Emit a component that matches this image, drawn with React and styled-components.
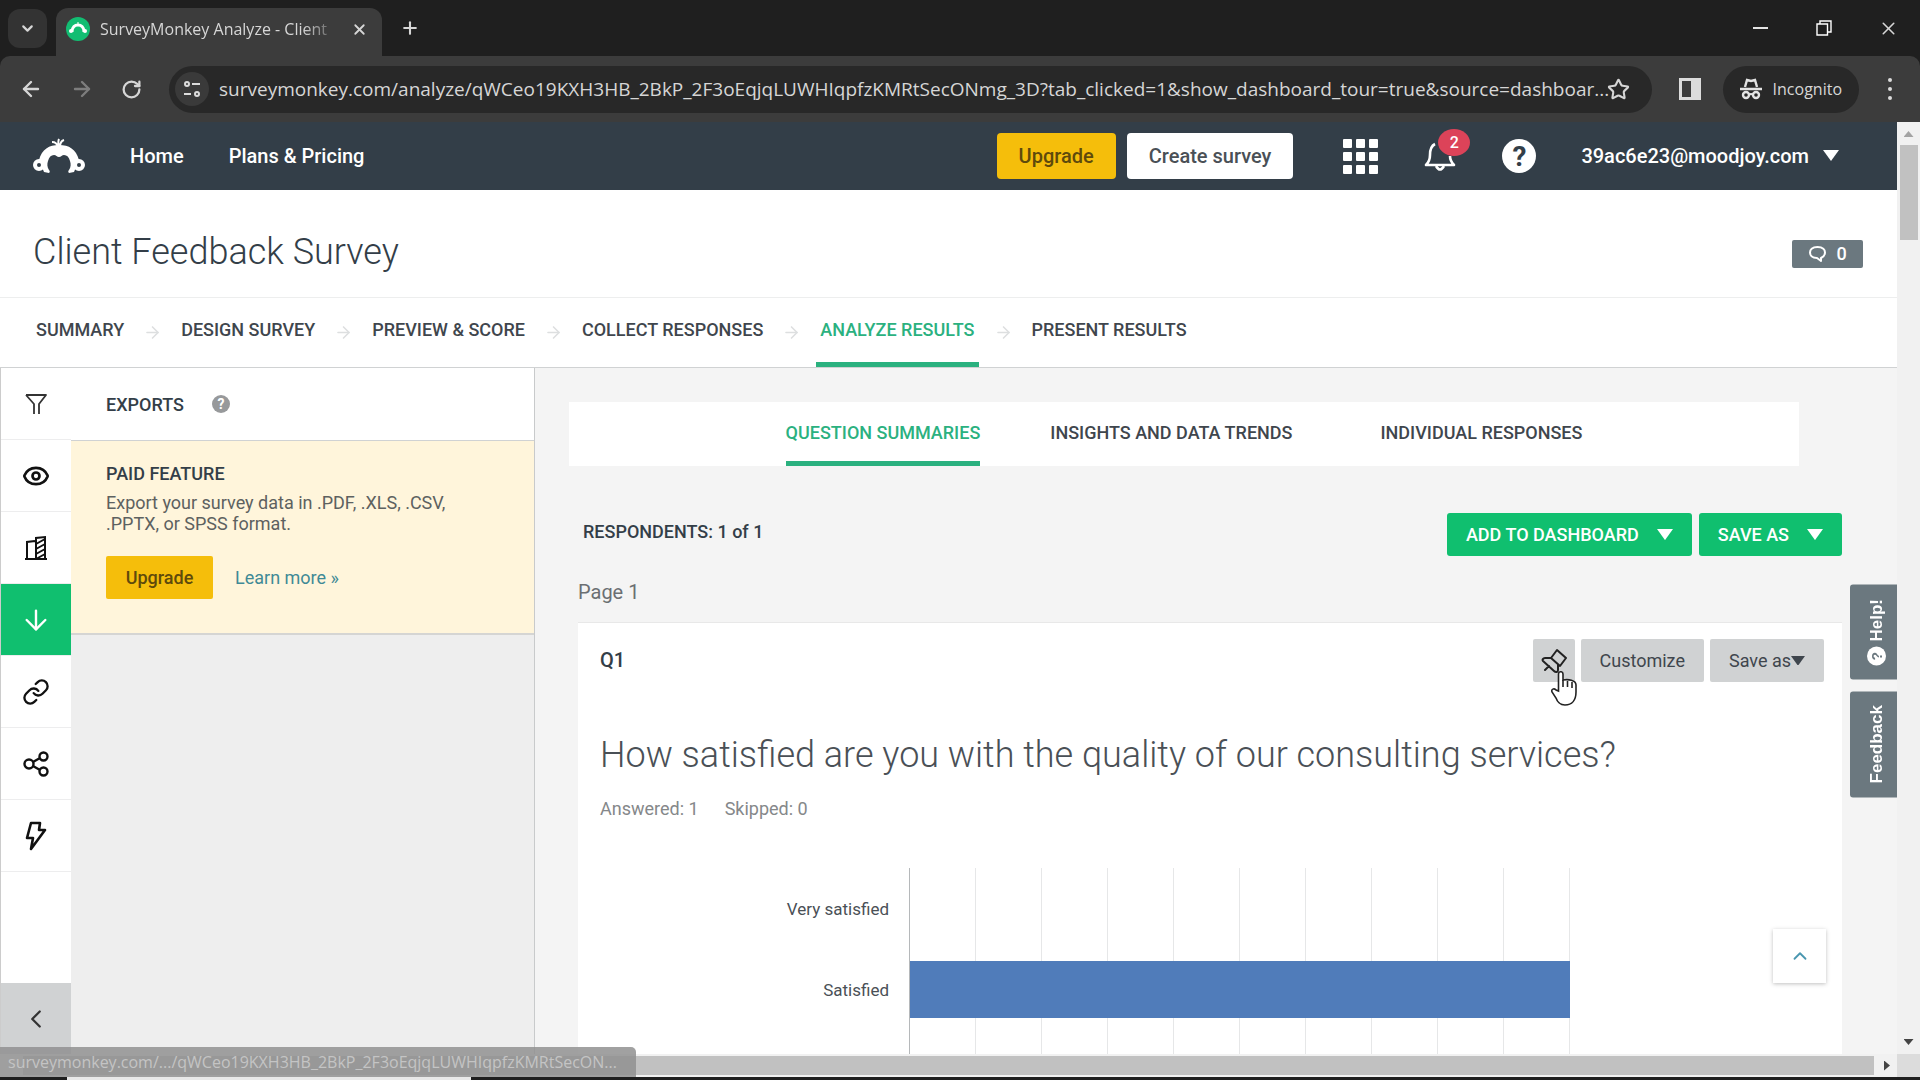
import React from "react";
import styled, { createGlobalStyle } from "styled-components";
import {
  ArrowDown,
  ArrowLeft,
  ArrowRight,
  ChevronDown,
  ChevronLeft,
  ChevronUp,
  Eye,
  Plus,
  RotateCw,
  Star,
  X,
} from "lucide-react";

const steps = [
  "SUMMARY",
  "DESIGN SURVEY",
  "PREVIEW & SCORE",
  "COLLECT RESPONSES",
  "ANALYZE RESULTS",
  "PRESENT RESULTS",
];

const views = [
  "QUESTION SUMMARIES",
  "INSIGHTS AND DATA TRENDS",
  "INDIVIDUAL RESPONSES",
];

const answers = [
  { label: "Very satisfied", value: 0 },
  { label: "Satisfied", value: 100 },
];

const Caret = ({ size = 16 }) => (
  <svg width={size} height={size * 0.7} viewBox="0 0 16 11" aria-hidden="true">
    <path d="M0 0h16L8 11z" fill="currentColor" />
  </svg>
);

const MonkeyLogo = () => (
  <svg width="52" height="36" viewBox="0 0 52 36" aria-hidden="true">
    <path
      d="M6 22C9 11 16 7 26 7s17 4 20 15l-5 12-5 1c-1-1-1-2 0-3 2-3 2-6 1-9-1-4-3-6-6-6-2 0-3 2-5 2s-3-2-5-2c-3 0-5 2-6 6-1 3-1 6 1 9 1 1 1 2 0 3l-5-1z"
      fill="#fff"
    />
    <path
      d="M25 9c-1-4-3-5-6-5M26 9c-1-4-1-6 0-8M27 9c0-4 1-6 4-7"
      fill="none"
      stroke="#fff"
      strokeWidth="2"
    />
    <circle cx="6" cy="27" r="4" fill="#333e48" stroke="#fff" strokeWidth="4" />
    <circle cx="46" cy="27" r="4" fill="#333e48" stroke="#fff" strokeWidth="4" />
  </svg>
);

const Favicon = () => (
  <svg width="24" height="24" viewBox="0 0 24 24" aria-hidden="true">
    <circle cx="12" cy="12" r="12" fill="#12bd72" />
    <path
      d="M6 15c0-5 3-7 6-7s6 2 6 7"
      fill="none"
      stroke="#fff"
      strokeWidth="3"
    />
    <circle cx="5" cy="14" r="2" fill="#fff" />
    <circle cx="19" cy="14" r="2" fill="#fff" />
    <path d="M12 8V5" stroke="#fff" />
  </svg>
);

const TuneIcon = () => (
  <svg
    width="20"
    height="20"
    viewBox="0 0 20 20"
    fill="none"
    stroke="#dcdcdc"
    strokeWidth="2"
    aria-hidden="true"
  >
    <circle cx="5" cy="5" r="2" />
    <path d="M10 5h8M2 15h7" />
    <circle cx="15" cy="15" r="2" />
  </svg>
);

const RestoreIcon = () => (
  <svg
    width="16"
    height="16"
    viewBox="0 0 16 16"
    fill="none"
    stroke="#fff"
    strokeWidth="1.4"
    aria-hidden="true"
  >
    <path d="M1 4h10.500v11H1zM4 4V1h11v11h-3" />
  </svg>
);

const SidePanelIcon = () => (
  <svg width="22" height="22" viewBox="0 0 22 22" aria-hidden="true">
    <path d="M0 0h22v22H0zM3 3v16h9V3z" fill="#dcdcdc" fillRule="evenodd" />
  </svg>
);

const IncognitoIcon = () => (
  <svg width="22" height="22" viewBox="0 0 22 22" aria-hidden="true">
    <path
      d="M5 9l2-7 4 1 4-1 2 7M0 11h22"
      fill="none"
      stroke="#e3e3e3"
      strokeWidth="2.400"
    />
    <circle cx="6" cy="17" r="3" fill="none" stroke="#e3e3e3" strokeWidth="2.400" />
    <circle cx="16" cy="17" r="3" fill="none" stroke="#e3e3e3" strokeWidth="2.400" />
    <path d="M9 17q2-2 4 0" fill="none" stroke="#e3e3e3" strokeWidth="2" />
  </svg>
);

const MoreIcon = () => (
  <svg width="4" height="24" viewBox="0 0 4 24" fill="#dcdcdc" aria-hidden="true">
    <circle cx="2" cy="3" r="2" />
    <circle cx="2" cy="12" r="2" />
    <circle cx="2" cy="21" r="2" />
  </svg>
);

const GridIcon = () => (
  <svg width="35" height="35" viewBox="0 0 35 35" fill="#fff" aria-hidden="true">
    {[0, 13, 26].map((y) =>
      [0, 13, 26].map((x) => (
        <rect key={`${x}-${y}`} x={x} y={y} width="9" height="9" rx="1" />
      ))
    )}
  </svg>
);

const BellIcon = () => (
  <svg
    width="32"
    height="32"
    viewBox="0 0 32 32"
    fill="none"
    stroke="#fff"
    strokeWidth="2.600"
    aria-hidden="true"
  >
    <path
      d="M11 4C7 6 6 10 6 15c0 5-1 7-4 10h28c-3-3-4-5-4-9"
      strokeLinejoin="round"
    />
    <path d="M12 26q4 7 8 0" />
  </svg>
);

const SpeechIcon = () => (
  <svg
    width="19"
    height="18"
    viewBox="0 0 19 18"
    fill="none"
    stroke="#fff"
    strokeWidth="2"
    aria-hidden="true"
  >
    <path
      d="M9 13C4 13 2 10 2 7.500S4 2 9.500 2 17 5 17 7.500 15 12 13 13v3z"
      strokeLinejoin="round"
    />
  </svg>
);

const FunnelIcon = () => (
  <svg
    width="24"
    height="24"
    viewBox="0 0 24 24"
    fill="none"
    stroke="#333"
    strokeWidth="1.800"
    aria-hidden="true"
  >
    <path d="M2 3h20l-7 9v10M10 22V12L2 3" strokeLinejoin="round" />
  </svg>
);

const BuildingIcon = () => (
  <svg
    width="24"
    height="26"
    viewBox="0 0 24 26"
    fill="none"
    stroke="#111"
    strokeWidth="2"
    aria-hidden="true"
  >
    <path d="M1 24h22M3 24V7l8-1M12 24V3l9-1v22M12 9l9-5M12 14l9-5M12 19l9-5M12 24l9-5" />
  </svg>
);

const ShareIcon = () => (
  <svg
    width="28"
    height="28"
    viewBox="0 0 28 28"
    fill="none"
    stroke="#111"
    strokeWidth="2.400"
    aria-hidden="true"
  >
    <circle cx="7" cy="14" r="4.500" />
    <circle cx="21.500" cy="6.500" r="4" />
    <circle cx="21.500" cy="21.500" r="4" />
    <path d="M11 12l7-4M11 16l7 4" />
  </svg>
);

const BoltIcon = () => (
  <svg
    width="24"
    height="30"
    viewBox="0 0 24 30"
    fill="none"
    stroke="#111"
    strokeWidth="2.600"
    strokeLinejoin="round"
    aria-hidden="true"
  >
    <path d="M7 2h9l-1 7h6L7 28l2-11H3z" />
  </svg>
);

const LinkIcon = () => (
  <svg
    width="28"
    height="28"
    viewBox="0 0 24 24"
    fill="none"
    stroke="#111"
    strokeWidth="2"
    strokeLinecap="round"
    aria-hidden="true"
  >
    <path d="M10 13a5 5 0 0 0 7.540.540l3-3a5 5 0 0 0-7.070-7.070l-1.720 1.710" />
    <path d="M14 11a5 5 0 0 0-7.540-.540l-3 3a5 5 0 0 0 7.070 7.070l1.710-1.710" />
  </svg>
);

const PinIcon = () => (
  <svg
    width="26"
    height="26"
    viewBox="0 0 26 26"
    fill="none"
    stroke="#222"
    strokeWidth="2"
    strokeLinejoin="round"
    strokeLinecap="round"
    aria-hidden="true"
  >
    <path d="M16 2l9 8-6 8-9-8z" />
    <path d="M10 10H4c-2 0-3 2-2 3l11 10c2 2 4 1 4-1v-5M8 18l-4 4" />
  </svg>
);

const HandCursor = () => (
  <svg width="26" height="35" viewBox="0 0 26 35" aria-hidden="true">
    <path
      d="M7.500 20V3c0-3 4.500-3 4.500 0v6c5-1 13 0 13 5v7c0 8-4 13-11 13-5 0-8-4-9-7l-4-6c-1-3 2-4 4-2z"
      fill="#fff"
      stroke="#222"
      strokeWidth="1.600"
    />
    <path d="M12 9v7M16.500 10v6M21 11v6" stroke="#222" strokeWidth="1.600" />
  </svg>
);

const App = () => {
  return (
    <Browser>
      <GlobalStyle />
      <TabStrip>
        <TabSearch aria-label="Search tabs">
          <ChevronDown size={17} strokeWidth={3} />
        </TabSearch>
        <Tab>
          <Favicon />
          <TabTitle>SurveyMonkey Analyze - Client</TabTitle>
          <ChromeButton aria-label="Close tab">
            <X size={17} strokeWidth={2.5} />
          </ChromeButton>
        </Tab>
        <ChromeButton aria-label="New tab">
          <Plus size={20} strokeWidth={2.5} />
        </ChromeButton>
        <WindowButtons>
          <ChromeButton aria-label="Minimize">
            <MinimizeLine />
          </ChromeButton>
          <ChromeButton aria-label="Restore">
            <RestoreIcon />
          </ChromeButton>
          <ChromeButton aria-label="Close">
            <X size={21} strokeWidth={1.8} />
          </ChromeButton>
        </WindowButtons>
      </TabStrip>

      <Toolbar>
        <ChromeButton aria-label="Back">
          <ArrowLeft size={24} strokeWidth={2.4} />
        </ChromeButton>
        <ChromeButton aria-label="Forward" $dim>
          <ArrowRight size={24} strokeWidth={2.4} />
        </ChromeButton>
        <ChromeButton aria-label="Reload">
          <RotateCw size={21} strokeWidth={2.6} />
        </ChromeButton>
        <AddressBar>
          <SiteInfo aria-label="Site information">
            <TuneIcon />
          </SiteInfo>
          <AddressInput
            aria-label="Address"
            readOnly
            value="surveymonkey.com/analyze/qWCeo19KXH3HB_2BkP_2F3oEqjqLUWHIqpfzKMRtSecONmg_3D?tab_clicked=1&show_dashboard_tour=true&source=dashboar..."
          />
          <ChromeButton aria-label="Bookmark">
            <Star size={23} strokeWidth={2.2} />
          </ChromeButton>
        </AddressBar>
        <ToolbarEnd>
          <ChromeButton aria-label="Side panel">
            <SidePanelIcon />
          </ChromeButton>
          <Incognito>
            <IncognitoIcon />
            Incognito
          </Incognito>
          <ChromeButton aria-label="Menu">
            <MoreIcon />
          </ChromeButton>
        </ToolbarEnd>
      </Toolbar>

      <Viewport>
        <Page>
          <SiteHeader>
            <HeaderLink href="#logo" aria-label="SurveyMonkey">
              <MonkeyLogo />
            </HeaderLink>
            <HeaderLink href="#home">Home</HeaderLink>
            <HeaderLink href="#pricing">Plans &amp; Pricing</HeaderLink>
            <HeaderEnd>
              <HeaderButton $yellow>Upgrade</HeaderButton>
              <HeaderButton>Create survey</HeaderButton>
              <HeaderIcons>
                <IconButton aria-label="Products">
                  <GridIcon />
                </IconButton>
                <IconButton aria-label="Notifications">
                  <BellIcon />
                  <Badge>2</Badge>
                </IconButton>
                <IconButton aria-label="Help">
                  <Round $size={34}>?</Round>
                </IconButton>
              </HeaderIcons>
              <Account>
                39ac6e23@moodjoy.com
                <Caret />
              </Account>
            </HeaderEnd>
          </SiteHeader>

          <TitleBar>
            <SurveyTitle>Client Feedback Survey</SurveyTitle>
            <CommentCount aria-label="Comments">
              <SpeechIcon />0
            </CommentCount>
          </TitleBar>

          <StepNav>
            {steps.map((step, i) => (
              <React.Fragment key={step}>
                {i > 0 && <ArrowRight size={19} strokeWidth={2} color="#dddfe0" />}
                <Step href={`#step-${i}`} $active={step === "ANALYZE RESULTS"}>
                  {step}
                </Step>
              </React.Fragment>
            ))}
          </StepNav>

          <Workspace>
            <Rail>
              <RailButton aria-label="Filter">
                <FunnelIcon />
              </RailButton>
              <RailButton aria-label="Show">
                <Eye size={28} strokeWidth={2.3} />
              </RailButton>
              <RailButton aria-label="Compare">
                <BuildingIcon />
              </RailButton>
              <RailButton aria-label="Exports" $active>
                <ArrowDown size={32} strokeWidth={1.8} />
              </RailButton>
              <RailButton aria-label="Shared link">
                <LinkIcon />
              </RailButton>
              <RailButton aria-label="Share">
                <ShareIcon />
              </RailButton>
              <RailButton aria-label="Integrations">
                <BoltIcon />
              </RailButton>
              <Collapse aria-label="Collapse">
                <ChevronLeft size={30} strokeWidth={1.8} />
              </Collapse>
            </Rail>

            <Panel>
              <PanelHeader>
                EXPORTS
                <Round $size={18} $grey>
                  ?
                </Round>
              </PanelHeader>
              <PaidFeature>
                <PaidTitle>PAID FEATURE</PaidTitle>
                <PaidText>
                  Export your survey data in .PDF, .XLS, .CSV,
                  <br />
                  .PPTX, or SPSS format.
                </PaidText>
                <PaidActions>
                  <UpgradeButton>Upgrade</UpgradeButton>
                  <LearnLink href="#learn">Learn more »</LearnLink>
                </PaidActions>
              </PaidFeature>
            </Panel>

            <Results>
              <ViewTabs>
                {views.map((view, i) => (
                  <ViewTab key={view} href={`#view-${i}`} $active={i === 0}>
                    {view}
                  </ViewTab>
                ))}
              </ViewTabs>
              <ResultsBar>
                <Respondents>RESPONDENTS: 1 of 1</Respondents>
                <GreenButton>
                  ADD TO DASHBOARD
                  <Caret />
                </GreenButton>
                <GreenButton>
                  SAVE AS
                  <Caret />
                </GreenButton>
              </ResultsBar>
              <PageLabel>Page 1</PageLabel>
              <Card>
                <CardHeader>
                  <QuestionNumber>Q1</QuestionNumber>
                  <PinSlot>
                    <GreyButton $icon aria-label="Pin to dashboard">
                      <PinIcon />
                    </GreyButton>
                    <Pointer>
                      <HandCursor />
                    </Pointer>
                  </PinSlot>
                  <GreyButton>Customize</GreyButton>
                  <GreyButton>
                    Save as
                    <Caret size={14} />
                  </GreyButton>
                </CardHeader>
                <Question>
                  How satisfied are you with the quality of our consulting
                  services?
                </Question>
                <Counts>
                  <span>Answered: 1</span>
                  <span>Skipped: 0</span>
                </Counts>
                <Chart>
                  {answers.map(({ label, value }) => (
                    <ChartRow key={label}>
                      <ChartLabel>{label}</ChartLabel>
                      <Plot>
                        <Bar style={{ width: `${value}%` }} />
                      </Plot>
                    </ChartRow>
                  ))}
                  <ChartRow>
                    <ChartLabel />
                    <Plot />
                  </ChartRow>
                </Chart>
              </Card>
            </Results>
          </Workspace>

          <SideTabs>
            <SideTab>
              <Round $size={19} $dark>
                ?
              </Round>
              Help!
            </SideTab>
            <SideTab>Feedback</SideTab>
          </SideTabs>
          <BackToTop aria-label="Back to top">
            <ChevronUp size={22} strokeWidth={2} />
          </BackToTop>
        </Page>

        <VerticalScroll>
          <Arrow $dir="up" />
          <VerticalThumb />
          <Arrow $dir="down" />
        </VerticalScroll>
        <HorizontalScroll>
          <HorizontalThumb />
          <Arrow $dir="right" />
        </HorizontalScroll>
        <ScrollCorner />
        <StatusBubble>
          surveymonkey.com/.../qWCeo19KXH3HB_2BkP_2F3oEqjqLUWHIqpfzKMRtSecON...
        </StatusBubble>
      </Viewport>
      <WindowEdge />
    </Browser>
  );
};

export default App;

const GlobalStyle = createGlobalStyle`
  * {
    box-sizing: border-box;
  }
  body {
    margin: 0;
    overflow: hidden;
  }
  button, input {
    border: 0;
    padding: 0;
    font: inherit;
    color: inherit;
    background: none;
  }
  a {
    color: inherit;
    text-decoration: none;
  }
`;

const Browser = styled.div`
  height: 100vh;
  display: flex;
  flex-direction: column;
  background-color: #1f1f1f;
  color: #d6d6d6;
  font-family: "Open Sans", sans-serif;
`;
const TabStrip = styled.div`
  height: 56px;
  flex: none;
  display: flex;
  align-items: center;
  padding-left: 8px;
`;
const TabSearch = styled.button`
  width: 39px;
  height: 39px;
  display: flex;
  align-items: center;
  justify-content: center;
  border-radius: 12px;
  background-color: #333;
`;
const Tab = styled.div`
  align-self: flex-end;
  width: 326px;
  height: 48px;
  margin: 0 18px 0 9px;
  padding: 0 14px 6px 10px;
  display: flex;
  align-items: center;
  gap: 10px;
  border-radius: 12px 12px 0 0;
  background-color: #3c3c3c;
`;
const TabTitle = styled.div`
  flex: 1;
  overflow: hidden;
  white-space: nowrap;
  font-size: 16px;
  mask-image: linear-gradient(90deg, #000 84%, transparent);
`;
const ChromeButton = styled.button`
  display: flex;
  align-items: center;
  justify-content: center;
  color: ${({ $dim }) => ($dim ? "#7d7d7d" : "#d6d6d6")};
`;
const WindowButtons = styled.div`
  margin-left: auto;
  display: flex;
  & > button {
    width: 64px;
  }
`;
const MinimizeLine = styled.span`
  width: 15px;
  height: 2px;
  background-color: #e3e3e3;
`;
const Toolbar = styled.div`
  height: 66px;
  flex: none;
  display: flex;
  align-items: center;
  padding: 0 28px 0 19px;
  gap: 27px;
  border-radius: 10px 10px 0 0;
  background-color: #3c3c3c;
`;
const AddressBar = styled.div`
  flex: 1;
  height: 47px;
  display: flex;
  align-items: center;
  padding: 0 22px 0 6px;
  border-radius: 24px;
  background-color: #282828;
`;
const SiteInfo = styled.button`
  width: 34px;
  height: 34px;
  display: flex;
  align-items: center;
  justify-content: center;
  border-radius: 50%;
  background-color: #3a3a3a;
`;
const AddressInput = styled.input`
  flex: 1;
  min-width: 0;
  margin-right: -6px;
  padding-left: 10px;
  font-size: 19px;
  outline: none;
`;
const ToolbarEnd = styled.div`
  display: flex;
  align-items: center;
  gap: 22px;
  & > :last-child {
    margin-left: 7px;
  }
`;
const Incognito = styled.button`
  height: 47px;
  padding: 0 17px;
  display: flex;
  align-items: center;
  gap: 11px;
  border-radius: 24px;
  background-color: #282828;
  font-size: 16px;
`;

const Viewport = styled.div`
  flex: 1;
  min-height: 0;
  position: relative;
  display: grid;
  grid-template-columns: minmax(0, 1fr) 23px;
  grid-template-rows: minmax(0, 1fr) 23px;
`;
const Page = styled.main`
  position: relative;
  overflow: hidden;
  display: flex;
  flex-direction: column;
  background-color: #fff;
  color: #333e48;
  font-family: Roboto, sans-serif;
`;
const SiteHeader = styled.header`
  height: 68px;
  flex: none;
  display: flex;
  align-items: center;
  gap: 45px;
  padding: 0 58px 0 33px;
  background-color: #333e48;
  color: #fff;
  font-size: 20px;
  font-weight: 500;
`;
const HeaderLink = styled.a`
  display: flex;
`;
const HeaderEnd = styled.div`
  margin-left: auto;
  display: flex;
  align-items: center;
`;
const HeaderButton = styled.button`
  height: 46px;
  margin-right: 11px;
  padding: 0 22px;
  border-radius: 4px;
  background-color: ${({ $yellow }) => ($yellow ? "#f5be0b" : "#fff")};
  color: ${({ $yellow }) => ($yellow ? "#5e4a0c" : "#4a5056")};
`;
const HeaderIcons = styled.div`
  display: flex;
  align-items: center;
  gap: 46px;
  margin: 0 45px 0 39px;
`;
const IconButton = styled.button`
  position: relative;
  display: flex;
`;
const Badge = styled.span`
  position: absolute;
  top: -11px;
  right: -14px;
  width: 32px;
  height: 27px;
  display: flex;
  align-items: center;
  justify-content: center;
  border-radius: 50%;
  background-color: #dc4359;
  font-size: 16px;
`;
const Round = styled.span`
  width: ${({ $size }) => $size}px;
  height: ${({ $size }) => $size}px;
  display: inline-flex;
  align-items: center;
  justify-content: center;
  border-radius: 50%;
  background-color: ${({ $grey }) => ($grey ? "#97999b" : "#fff")};
  color: ${({ $grey, $dark }) => ($grey ? "#fff" : $dark ? "#6b787f" : "#333e48")};
  font-size: ${({ $size }) => ($size > 20 ? 28 : 14)}px;
  font-weight: 700;
`;
const Account = styled.button`
  display: flex;
  align-items: center;
  gap: 14px;
`;
const TitleBar = styled.div`
  height: 108px;
  flex: none;
  display: flex;
  align-items: center;
  justify-content: space-between;
  padding: 20px 34px 0 33px;
  border-bottom: 1px solid #edeeee;
`;
const SurveyTitle = styled.h1`
  margin: 0;
  padding-bottom: 4px;
  font-size: 36px;
  font-weight: 300;
`;
const CommentCount = styled.button`
  width: 71px;
  height: 28px;
  display: flex;
  align-items: center;
  justify-content: center;
  gap: 9px;
  border-radius: 2px;
  background-color: #6b787f;
  color: #fff;
  font-size: 18px;
  font-weight: 500;
`;
const StepNav = styled.nav`
  height: 70px;
  flex: none;
  display: flex;
  align-items: center;
  gap: 15px;
  padding: 0 32px;
  border-bottom: 1px solid #d0d2d3;
`;
const Step = styled.a`
  align-self: stretch;
  display: flex;
  align-items: center;
  padding: 0 4px 6px;
  box-shadow: ${({ $active }) => ($active ? "inset 0 -5px #2bb17f" : "none")};
  color: ${({ $active }) => ($active ? "#2bb17f" : "#3f464d")};
  font-size: 18px;
  font-weight: 500;
`;

const Workspace = styled.div`
  flex: 1;
  min-height: 0;
  display: flex;
`;
const Rail = styled.div`
  width: 71px;
  flex: none;
  display: flex;
  flex-direction: column;
  border-left: 1px solid #ccc;
`;
const RailButton = styled.button`
  height: 72px;
  flex: none;
  display: flex;
  align-items: center;
  justify-content: center;
  border-bottom: 1px solid #ededee;
  background-color: ${({ $active }) => ($active ? "#10bf6f" : "#fff")};
  color: ${({ $active }) => ($active ? "#fff" : "#111")};
`;
const Collapse = styled.button`
  height: 71px;
  flex: none;
  margin-top: auto;
  display: flex;
  align-items: center;
  justify-content: center;
  background-color: #d0d2d3;
  color: #333;
`;
const Panel = styled.aside`
  width: 464px;
  flex: none;
  border-right: 1px solid #c8cacb;
  background-color: #eee;
`;
const PanelHeader = styled.div`
  height: 73px;
  padding: 0 35px;
  display: flex;
  align-items: center;
  gap: 28px;
  border-bottom: 1px solid #d0d2d3;
  background-color: #fff;
  font-size: 18px;
  font-weight: 500;
`;
const PaidFeature = styled.section`
  height: 194px;
  padding: 21px 35px;
  border-bottom: 2px solid #d5d5d3;
  background-color: #fff5db;
`;
const PaidTitle = styled.h2`
  margin: 0;
  font-size: 18px;
  line-height: 24px;
  font-weight: 500;
`;
const PaidText = styled.p`
  margin: 6px 0 22px;
  font-size: 18px;
  line-height: 21px;
  white-space: nowrap;
  color: #5d6160;
`;
const PaidActions = styled.div`
  display: flex;
  align-items: center;
  gap: 22px;
`;
const UpgradeButton = styled.button`
  width: 107px;
  height: 43px;
  border-radius: 2px;
  background-color: #f5be0b;
  color: #5e4a0c;
  font-size: 18px;
  font-weight: 500;
`;
const LearnLink = styled.a`
  color: #3f8a96;
  font-size: 18px;
`;

const Results = styled.section`
  flex: 1;
  min-width: 0;
  padding: 34px 55px 0 43px;
  background-color: #f4f4f4;
`;
const ViewTabs = styled.nav`
  height: 64px;
  margin: 0 43px 0 -9px;
  display: flex;
  justify-content: center;
  gap: 70px;
  background-color: #fff;
  & > :last-child {
    margin-left: 18px;
  }
`;
const ViewTab = styled.a`
  display: flex;
  align-items: center;
  padding-bottom: 4px;
  box-shadow: ${({ $active }) => ($active ? "inset 0 -5px #2bb17f" : "none")};
  color: ${({ $active }) => ($active ? "#2bb17f" : "#3f464d")};
  font-size: 18px;
  font-weight: 500;
`;
const ResultsBar = styled.div`
  margin-top: 47px;
  display: flex;
  gap: 7px;
`;
const Respondents = styled.div`
  flex: 1;
  padding: 8px 5px;
  font-size: 18px;
  font-weight: 500;
`;
const GreenButton = styled.button`
  height: 43px;
  padding: 0 19px;
  display: flex;
  align-items: center;
  gap: 18px;
  border-radius: 3px;
  background-color: #10bf6f;
  color: #fff;
  font-size: 18px;
  font-weight: 500;
`;
const PageLabel = styled.div`
  margin: 24px 0 17px;
  font-size: 20px;
  line-height: 25px;
  color: #6b6f72;
`;
const Card = styled.article`
  height: 600px;
  padding: 16px 18px 0 22px;
  background-color: #fff;
  border-top: 1px solid #e8e8e8;
`;
const CardHeader = styled.div`
  display: flex;
  gap: 6px;
`;
const QuestionNumber = styled.div`
  flex: 1;
  line-height: 42px;
  font-size: 20px;
  font-weight: 500;
`;
const PinSlot = styled.div`
  position: relative;
`;
const Pointer = styled.div`
  position: absolute;
  top: 32px;
  left: 18px;
  z-index: 1;
`;
const GreyButton = styled.button`
  width: ${({ $icon }) => ($icon ? "42px" : "auto")};
  height: 43px;
  padding: 0 ${({ $icon }) => ($icon ? 0 : 19)}px;
  display: flex;
  align-items: center;
  justify-content: center;
  border-radius: 2px;
  background-color: #d0d2d3;
  color: #3f464d;
  font-size: 18px;
`;
const Question = styled.h2`
  margin: 53px 0 0;
  font-size: 36px;
  line-height: 40px;
  font-weight: 300;
  white-space: nowrap;
  color: #4a5056;
`;
const Counts = styled.div`
  margin: 22px 0 47px;
  display: flex;
  gap: 26px;
  line-height: 24px;
  font-size: 18px;
  color: #85888a;
`;
const Chart = styled.div`
  padding: 0 254px 0 180px;
`;
const ChartRow = styled.div`
  height: 81px;
  display: flex;
  align-items: center;
`;
const ChartLabel = styled.div`
  width: 129px;
  padding-right: 20px;
  white-space: nowrap;
  text-align: right;
  font-size: 17px;
  color: #4a5056;
`;
const Plot = styled.div`
  flex: 1;
  align-self: stretch;
  display: flex;
  align-items: center;
  border-left: 1px solid #b5b8ba;
  background-image: linear-gradient(90deg, transparent calc(100% - 1px), #e6e7e8 0);
  background-size: 10% 100%;
`;
const Bar = styled.div`
  height: 57px;
  background-color: #507cba;
`;

const SideTabs = styled.div`
  position: absolute;
  top: 463px;
  right: 0;
  display: flex;
  flex-direction: column;
  align-items: flex-end;
  gap: 11px;
`;
const SideTab = styled.button`
  width: 47px;
  padding: 14px 7px 14px 0;
  display: flex;
  align-items: center;
  gap: 5px;
  writing-mode: vertical-rl;
  transform: rotate(180deg);
  border-radius: 0 3px 3px 0;
  background-color: #6b787f;
  color: #fff;
  font-family: "Liberation Sans", sans-serif;
  font-size: 17px;
  font-weight: 700;
`;
const BackToTop = styled.button`
  position: absolute;
  right: 71px;
  bottom: 71px;
  width: 53px;
  height: 54px;
  display: flex;
  align-items: center;
  justify-content: center;
  background-color: #fff;
  color: #4a97b0;
  box-shadow: 0 1px 4px rgba(0, 0, 0, 0.25);
`;

const VerticalScroll = styled.div`
  display: flex;
  flex-direction: column;
  align-items: center;
  padding: 9px 0;
  background-color: #f1f1f1;
  & > :last-child {
    margin-top: auto;
  }
`;
const VerticalThumb = styled.div`
  width: 18px;
  height: 95px;
  margin-top: 8px;
  background-color: #c1c1c1;
`;
const HorizontalScroll = styled.div`
  display: flex;
  align-items: center;
  gap: 10px;
  padding-right: 7px;
  background-color: #f1f1f1;
`;
const HorizontalThumb = styled.div`
  flex: 1;
  height: 19px;
  margin-left: 23px;
  background-color: #c1c1c1;
`;
const ScrollCorner = styled.div`
  background-color: #dcdcdc;
`;
const arrowShapes = {
  up: "polygon(50% 0, 100% 100%, 0 100%)",
  down: "polygon(0 0, 100% 0, 50% 100%)",
  right: "polygon(0 0, 100% 50%, 0 100%)",
};
const Arrow = styled.span`
  width: ${({ $dir }) => ($dir === "right" ? 6 : 10)}px;
  height: ${({ $dir }) => ($dir === "right" ? 10 : 6)}px;
  clip-path: ${({ $dir }) => arrowShapes[$dir]};
  background-color: ${({ $dir }) => ($dir === "up" ? "#a3a3a3" : "#444")};
`;
const StatusBubble = styled.div`
  position: absolute;
  left: 0;
  bottom: 0;
  width: 636px;
  height: 30px;
  padding-left: 8px;
  overflow: hidden;
  white-space: nowrap;
  line-height: 30px;
  border-radius: 0 5px 0 0;
  background-color: rgba(145, 145, 145, 0.85);
  color: #c4c4c4;
  font-size: 16px;
`;
const WindowEdge = styled.div`
  height: 3px;
  flex: none;
  background: linear-gradient(90deg, #1f1f1f 67px, #e8e8e8 67px, #e8e8e8 471px, #1f1f1f 471px);
`;
